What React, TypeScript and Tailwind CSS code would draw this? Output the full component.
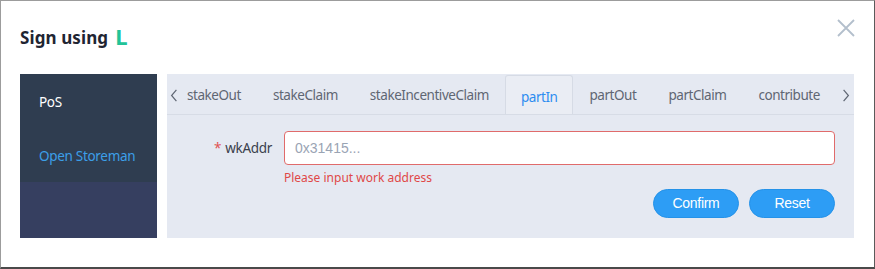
import React from 'react';

const tabs = ['stakeOut', 'stakeClaim', 'stakeIncentiveClaim', 'partIn', 'partOut', 'partClaim', 'contribute'];

const App: React.FC = () => {
  return (
    <div className="w-[875px] h-[269px] bg-white border border-[#9c9c9c] border-r-[#5a5a5a] border-b-2 border-b-[#4a4a4a] font-['Noto_Sans',sans-serif] relative">
      {/* header */}
      <div className="flex items-center h-[73px] pl-[19px] pt-[1px]">
        <h2 className="text-[17px] font-bold text-[#1f2532] tracking-[0.1px]">Sign using</h2>
        <span className="ml-[7px] text-[22px] font-bold text-[#22c398] leading-none -mt-[4px]">L</span>
      </div>
      <button className="absolute right-[18px] top-[17px] w-[20px] h-[20px] text-[#b3bfcc]">
        <svg viewBox="0 0 20 20" width="20" height="20" fill="none" stroke="currentColor" strokeWidth="1.8">
          <path d="M2 2 L18 18 M18 2 L2 18" />
        </svg>
      </button>

      <div className="flex gap-[10px] pl-[19px] pr-[20px]">
        {/* sidebar */}
        <div className="w-[137px] shrink-0 h-[164px] flex flex-col bg-[#363f60]">
          <div className="bg-[#2f3d50] h-[108px] flex flex-col text-[13.5px] tracking-[-0.3px]">
            <div className="h-[56px] flex items-center pl-[19px] text-white">PoS</div>
            <div className="h-[52px] flex items-center pl-[19px] text-[#3c9fe8] whitespace-nowrap">Open Storeman</div>
          </div>
        </div>

        {/* main */}
        <div className="flex-1 min-w-0 h-[164px] bg-[#e5e9f2] flex flex-col">
          <div className="h-[41px] flex items-stretch border-b border-[#d7dce6] relative pl-[4px] overflow-hidden">
            <div className="absolute left-[3px] top-0 bottom-0 pt-[3px] flex items-center text-[#5f6673]">
              <svg viewBox="0 0 10 16" width="8" height="13" fill="none" stroke="currentColor" strokeWidth="1.5">
                <path d="M8 1 L2 8 L8 15" />
              </svg>
            </div>
            <div className="flex-1 flex items-stretch text-[13.5px] tracking-[-0.45px]">
              {tabs.map((t) => (
                <div
                  key={t}
                  className={
                    t === 'partIn'
                      ? 'px-[15px] pt-[3px] flex items-center text-[#2d8cf0] bg-[#eaedf4] border border-b-0 border-[#d6dbe5] rounded-t-[3px] -mb-[1px] mt-[1px]'
                      : 'px-[15px] pt-[3px] flex items-center text-[#5f6673] border border-transparent whitespace-nowrap'
                  }
                >
                  {t}
                </div>
              ))}
            </div>
            <div className="absolute right-[4px] top-0 bottom-0 pt-[3px] flex items-center text-[#5f6673]">
              <svg viewBox="0 0 10 16" width="8" height="13" fill="none" stroke="currentColor" strokeWidth="1.5">
                <path d="M2 1 L8 8 L2 15" />
              </svg>
            </div>
          </div>

          <div className="flex pt-[16px] pr-[19px]">
            <div className="w-[105px] h-[34px] flex items-center justify-end text-[13.5px] tracking-[-0.3px] text-[#3a404c]">
              <span className="text-[#e05252] mr-[4px]">*</span>wkAddr
            </div>
            <div className="flex-1 ml-[12px] flex flex-col">
              <div className="h-[34px] bg-white border border-[#e06b6b] rounded-[4px] flex items-center pl-[10px] text-[14px] text-[#9aa4b4] font-['Liberation_Sans',sans-serif]">
                0x31415...
              </div>
              <div className="text-[12px] text-[#e04848] mt-[4px] leading-[17px]">Please input work address</div>
              <div className="flex justify-end gap-[10px] mt-[3px]">
                <button className="w-[86px] h-[29px] rounded-full bg-[#2d9df5] border border-[#2592e8] text-white text-[14px] font-['Liberation_Sans',sans-serif] tracking-[-0.3px]">
                  Confirm
                </button>
                <button className="w-[86px] h-[29px] rounded-full bg-[#2d9df5] border border-[#2592e8] text-white text-[14px] font-['Liberation_Sans',sans-serif] tracking-[-0.3px]">
                  Reset
                </button>
              </div>
            </div>
          </div>
        </div>
      </div>
    </div>
  );
};

export default App;
